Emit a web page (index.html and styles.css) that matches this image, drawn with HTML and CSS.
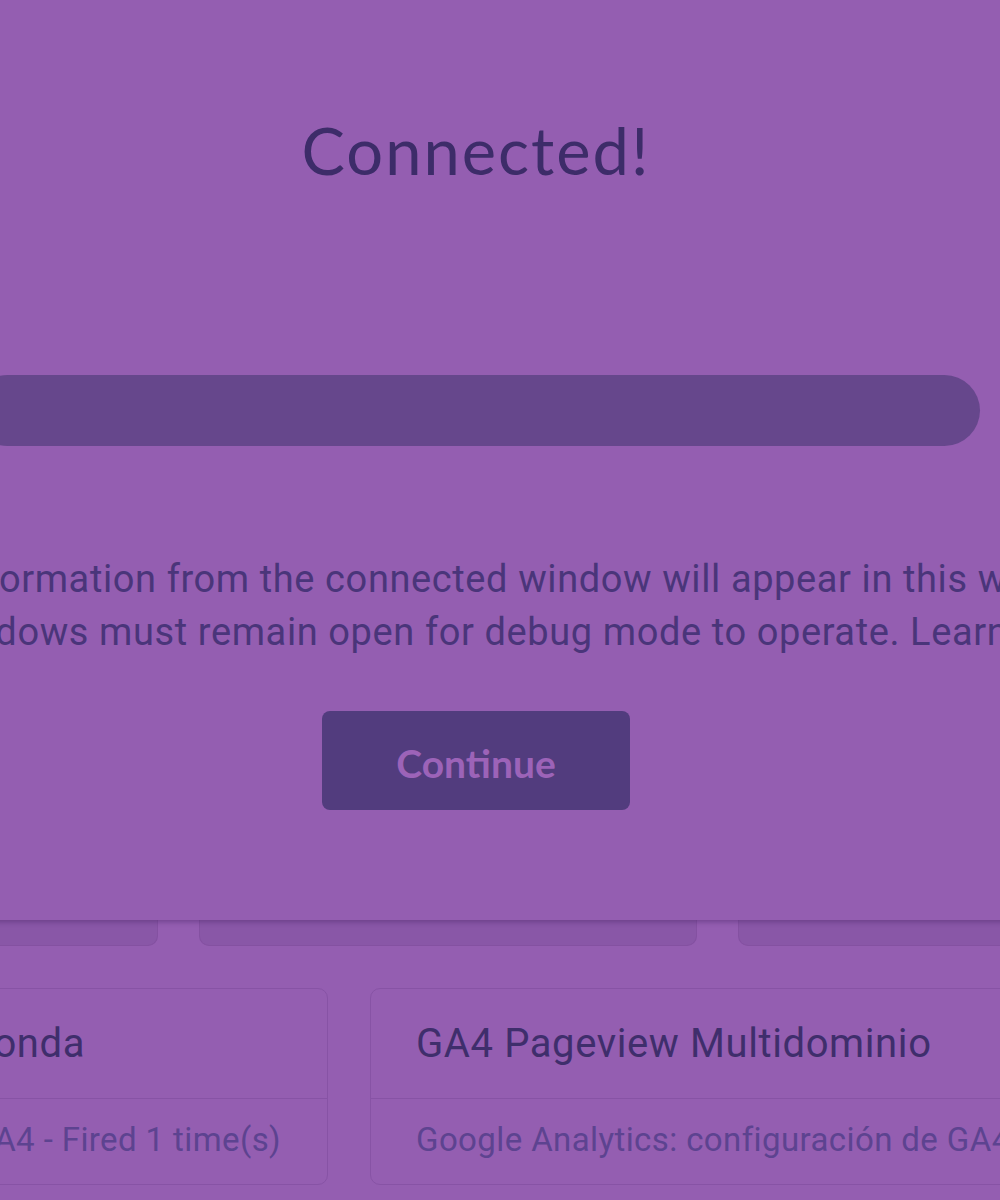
FILE: index.html
```html
<!DOCTYPE html>
<html lang="en">
<head>
  <meta charset="UTF-8" />
  <meta name="viewport" content="width=device-width, initial-scale=1.0" />
  <title>Tag Assistant | Connected</title>
  <link rel="stylesheet" href="styles.css">
</head>
<body>

  <div class="page">
    <div class="dialog">
      <h1 class="dialog-title">Connected!</h1>
      <div class="progress-bar"></div>
      <p class="dialog-text">
        Debug information from the connected window will appear in this window.<br>
        Both windows must remain open for debug mode to operate. Learn more
      </p>
      <button class="continue-btn">Continue</button>
    </div>

    <div class="card-row top-row">
      <div class="card-stub stub-a"></div>
      <div class="card-stub"></div>
      <div class="card-stub"></div>
    </div>

    <div class="card-row tag-row">
      <div class="tag-card card-left">
        <div class="tag-name"><span>GA4 Evento Respuesta Honda</span></div>
        <div class="tag-meta"><span>Google Analytics: GA4 - Fired 1 time(s)</span></div>
      </div>
      <div class="tag-card">
        <div class="tag-name"><span>GA4 Pageview Multidominio</span></div>
        <div class="tag-meta"><span>Google Analytics: configuración de GA4 - Fired 1 time(s)</span></div>
      </div>
    </div>
  </div>

</body>
</html>
```

FILE: styles.css
```css
*, *::before, *::after { box-sizing: border-box; }

body {
  margin: 0;
  background-color: #945eb1;
  font-family: Roboto, 'Liberation Sans', sans-serif;
  overflow: hidden;
}

.page {
  width: 1000px;
  height: 1200px;
  overflow: hidden;
}

.dialog {
  width: 1400px;
  height: 920px;
  margin-left: -224px;
  padding-top: 112px;
  display: flex;
  flex-direction: column;
  align-items: center;
  background-color: #945eb1;
  box-shadow: 0 2px 5px rgba(70, 35, 100, 0.45);
  position: relative;
  z-index: 1;
}

.dialog-title {
  margin: 0;
  font-family: Lato, 'Open Sans', sans-serif;
  font-weight: 400;
  font-size: 65px;
  line-height: 76px;
  letter-spacing: 2px;
  color: #3d2c69;
}

.progress-bar {
  width: 1008px;
  height: 71px;
  margin-top: 187px;
  border-radius: 36px;
  background-color: #66478c;
}

.dialog-text {
  margin: 107px 0 0;
  font-size: 38px;
  line-height: 53px;
  letter-spacing: 0.6px;
  text-align: center;
  color: #4a357a;
  white-space: nowrap;
}

.continue-btn {
  margin-top: 52px;
  width: 308px;
  height: 99px;
  border: none;
  border-radius: 8px;
  background-color: #523c7e;
  color: #9c63b8;
  font-family: Lato, 'Open Sans', sans-serif;
  font-weight: 700;
  font-size: 39px;
  padding: 4px 0 0;
}

.card-row {
  display: flex;
  gap: 41px;
}

.top-row {
  margin-left: -182px;
}

.card-stub {
  width: 498px;
  height: 26px;
  flex-shrink: 0;
  background-color: #8957a7;
  border: 1px solid #8451a1;
  border-top: none;
  border-radius: 0 0 10px 10px;
}

.stub-a { width: 340px; }

.tag-row {
  margin-top: 42px;
  margin-left: -172px;
  gap: 42px;
}

.tag-card {
  width: 700px;
  height: 197px;
  flex-shrink: 0;
  border: 1px solid #8753a5;
  border-radius: 10px;
  white-space: nowrap;
  overflow: hidden;
}

.card-left { width: 500px; }

.tag-name {
  display: flex;
  height: 110px;
  padding: 1px 0 0 45px;
  font-size: 40px;
  line-height: 108px;
  letter-spacing: 0.6px;
  color: #3f2e6c;
  border-bottom: 1px solid #8753a5;
}

.tag-meta {
  display: flex;
  padding: 0 0 0 45px;
  font-size: 33px;
  line-height: 82px;
  letter-spacing: 0.4px;
  color: #5d4390;
}

.tag-name span,
.tag-meta span {
  flex-shrink: 0;
}

/* left card is cut by the window edge: keep the text ends in view */
.card-left .tag-name {
  justify-content: flex-end;
  padding-right: 242px;
}

.card-left .tag-meta {
  justify-content: flex-end;
  padding-right: 46px;
}
```
